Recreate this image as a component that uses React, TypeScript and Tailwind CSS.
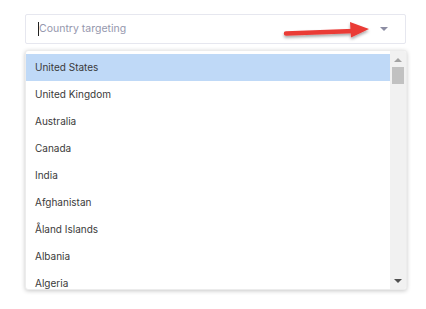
import { useState } from "react";

const countries = [
  "United States",
  "United Kingdom",
  "Australia",
  "Canada",
  "India",
  "Afghanistan",
  "Åland Islands",
  "Albania",
  "Algeria",
];

const font = { fontFamily: "Inter, 'Noto Sans', sans-serif" };

const App = () => {
  const [selected] = useState(0);

  return (
    <div className="relative w-[426px] h-[309px] bg-white overflow-hidden" style={font}>
      <div className="px-[25px] pt-[14px]">
        {/* input */}
        <div className="flex items-center h-[30px] w-[381px] border border-[#e6e7ef] rounded-[2px] pl-[12px] pr-[17px]">
          <span className="w-px h-[14px] bg-[#222]" />
          <span className="text-[10.5px] text-[#9597ad]">Country targeting</span>
          <span className="ml-auto w-0 h-0 border-l-[4px] border-r-[4px] border-t-[4px] border-l-transparent border-r-transparent border-t-[#8c8da3]" />
        </div>

        {/* dropdown list */}
        <div className="mt-[6px] flex w-[382px] h-[240px] bg-white rounded-[3px] border border-[#ececec] shadow-[0_1px_4px_rgba(0,0,0,0.22)] overflow-hidden">
          <div className="flex-1 flex flex-col pt-[3px]">
            {countries.map((c, i) => (
              <div
                key={c}
                className={`h-[27px] shrink-0 flex items-center pl-[9px] text-[10px] text-[#3a3a3a] ${i === selected ? "bg-[#bfd9f7]" : ""}`}
              >
                {c}
              </div>
            ))}
          </div>
          {/* scrollbar */}
          <div className="w-[16px] bg-[#f1f1f1] flex flex-col items-center">
            <span className="mt-[7px] w-0 h-0 border-l-[4px] border-r-[4px] border-b-[4px] border-l-transparent border-r-transparent border-b-[#a3a3a3]" />
            <div className="mt-[5px] w-[12px] h-[17px] bg-[#c1c1c1]" />
            <span className="mt-auto mb-[6px] w-0 h-0 border-l-[4px] border-r-[4px] border-t-[4px] border-l-transparent border-r-transparent border-t-[#505050]" />
          </div>
        </div>
      </div>

      {/* red annotation arrow */}
      <svg className="absolute left-[280px] top-[18px]" width="95" height="26" viewBox="0 0 95 26">
        <defs>
          <filter id="sh" x="-20%" y="-50%" width="140%" height="220%">
            <feDropShadow dx="0" dy="2" stdDeviation="1.5" floodColor="#000" floodOpacity="0.35" />
          </filter>
        </defs>
        <g filter="url(#sh)">
          <path d="M6 15.5 L74 13" stroke="#ea3a36" strokeWidth="4.5" strokeLinecap="round" />
          <path d="M70 4 L89 11 L71 19.5 Z" fill="#ea3a36" />
        </g>
      </svg>
    </div>
  );
};

export default App;
